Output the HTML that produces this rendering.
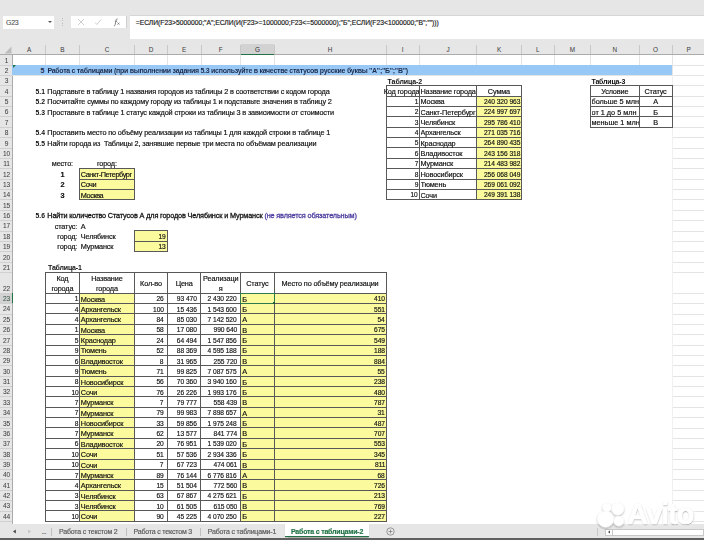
<!DOCTYPE html>
<html><head><meta charset="utf-8"><style>
html,body{margin:0;padding:0}
body{width:704px;height:540px;overflow:hidden;position:relative;background:#fff;font-family:"Liberation Sans",sans-serif}
#w{position:absolute;left:0;top:0;width:704px;height:540px;overflow:hidden;filter:blur(0.5px)}
.t{position:absolute;font-size:7.3px;line-height:8px;letter-spacing:-0.15px;white-space:nowrap;color:#111;-webkit-text-stroke:0.18px currentColor}
</style></head><body><div id="w">
<div style="position:absolute;left:0.00px;top:0.00px;width:704.00px;height:54.60px;background:#e6e6e6"></div>
<div style="position:absolute;left:2.60px;top:15.70px;width:51.90px;height:13.30px;background:#fff"></div>
<div class="t" style="left:6.00px;top:19.00px;color:#505050;font-size:7px;letter-spacing:-0.3px;-webkit-text-stroke:0.1px #505050">G23</div>
<div style="position:absolute;left:47.6px;top:21.2px;width:0;height:0;border-left:2px solid transparent;border-right:2px solid transparent;border-top:2px solid #555"></div>
<div style="position:absolute;left:61.50px;top:17.50px;width:1.20px;height:1.20px;background:#bdbdbd"></div>
<div style="position:absolute;left:61.50px;top:20.10px;width:1.20px;height:1.20px;background:#bdbdbd"></div>
<div style="position:absolute;left:61.50px;top:22.70px;width:1.20px;height:1.20px;background:#bdbdbd"></div>
<div style="position:absolute;left:61.50px;top:25.30px;width:1.20px;height:1.20px;background:#bdbdbd"></div>
<div style="position:absolute;left:70.70px;top:15.90px;width:56.40px;height:11.80px;background:#fff;border-right:0.7px solid #cfcfcf;box-sizing:border-box"></div>
<svg style="position:absolute;left:77px;top:18px" width="8" height="8" viewBox="0 0 8 8"><path d="M1 1L7 7M7 1L1 7" stroke="#c8c8c8" stroke-width="0.9"/></svg>
<svg style="position:absolute;left:94px;top:18px" width="8" height="8" viewBox="0 0 8 8"><path d="M1 4.5L3 6.5L7 1.5" stroke="#c8c8c8" stroke-width="0.9" fill="none"/></svg>
<svg style="position:absolute;left:113px;top:18px" width="9" height="9" viewBox="0 0 9 9"><path d="M4.6 0.9C3.6 0.7 3.2 1.4 3.0 2.6L2.2 6.6C2.0 7.5 1.6 7.9 0.9 7.7M1.9 3.2H4.1" stroke="#666" stroke-width="0.8" fill="none"/><path d="M4.6 4.6L6.4 6.6M6.4 4.6L4.6 6.6" stroke="#666" stroke-width="0.7"/></svg>
<div style="position:absolute;left:129.60px;top:15.40px;width:580.00px;height:23.20px;background:#fff;border-top:0.6px solid #d6d6d6;box-sizing:border-box"></div>
<div class="t" style="left:135.70px;top:19.40px;color:#222;font-size:6.75px;letter-spacing:0">=ЕСЛИ(F23&gt;5000000;"А";ЕСЛИ(И(F23&gt;=1000000;F23&lt;=5000000);"Б";ЕСЛИ(F23&lt;1000000;"В";"")))</div>
<div style="position:absolute;left:240.60px;top:44.30px;width:33.50px;height:10.30px;background:#d2d2d2"></div>
<div style="position:absolute;left:240.60px;top:53.50px;width:33.50px;height:1.30px;background:#217346"></div>
<div style="position:absolute;left:45.20px;top:44.90px;width:0.70px;height:9.70px;background:#c8c8c8"></div>
<div style="position:absolute;left:78.90px;top:44.90px;width:0.70px;height:9.70px;background:#c8c8c8"></div>
<div style="position:absolute;left:134.30px;top:44.90px;width:0.70px;height:9.70px;background:#c8c8c8"></div>
<div style="position:absolute;left:167.10px;top:44.90px;width:0.70px;height:9.70px;background:#c8c8c8"></div>
<div style="position:absolute;left:200.60px;top:44.90px;width:0.70px;height:9.70px;background:#c8c8c8"></div>
<div style="position:absolute;left:240.30px;top:44.90px;width:0.70px;height:9.70px;background:#c8c8c8"></div>
<div style="position:absolute;left:273.80px;top:44.90px;width:0.70px;height:9.70px;background:#c8c8c8"></div>
<div style="position:absolute;left:385.70px;top:44.90px;width:0.70px;height:9.70px;background:#c8c8c8"></div>
<div style="position:absolute;left:419.00px;top:44.90px;width:0.70px;height:9.70px;background:#c8c8c8"></div>
<div style="position:absolute;left:476.30px;top:44.90px;width:0.70px;height:9.70px;background:#c8c8c8"></div>
<div style="position:absolute;left:521.00px;top:44.90px;width:0.70px;height:9.70px;background:#c8c8c8"></div>
<div style="position:absolute;left:553.70px;top:44.90px;width:0.70px;height:9.70px;background:#c8c8c8"></div>
<div style="position:absolute;left:590.20px;top:44.90px;width:0.70px;height:9.70px;background:#c8c8c8"></div>
<div style="position:absolute;left:638.70px;top:44.90px;width:0.70px;height:9.70px;background:#c8c8c8"></div>
<div style="position:absolute;left:671.70px;top:44.90px;width:0.70px;height:9.70px;background:#c8c8c8"></div>
<div style="position:absolute;left:704.90px;top:44.90px;width:0.70px;height:9.70px;background:#c8c8c8"></div>
<div style="position:absolute;left:0.00px;top:54.10px;width:704.00px;height:0.80px;background:#ababab"></div>
<div style="position:absolute;left:240.60px;top:53.50px;width:33.50px;height:1.30px;background:#217346"></div>
<div class="t" style="left:-71.05px;width:200px;top:45.70px;text-align:center;font-size:6.4px;color:#444;-webkit-text-stroke:0.05px #444">A</div>
<div class="t" style="left:-37.65px;width:200px;top:45.70px;text-align:center;font-size:6.4px;color:#444;-webkit-text-stroke:0.05px #444">B</div>
<div class="t" style="left:6.90px;width:200px;top:45.70px;text-align:center;font-size:6.4px;color:#444;-webkit-text-stroke:0.05px #444">C</div>
<div class="t" style="left:51.00px;width:200px;top:45.70px;text-align:center;font-size:6.4px;color:#444;-webkit-text-stroke:0.05px #444">D</div>
<div class="t" style="left:84.15px;width:200px;top:45.70px;text-align:center;font-size:6.4px;color:#444;-webkit-text-stroke:0.05px #444">E</div>
<div class="t" style="left:120.75px;width:200px;top:45.70px;text-align:center;font-size:6.4px;color:#444;-webkit-text-stroke:0.05px #444">F</div>
<div class="t" style="left:157.35px;width:200px;top:45.70px;text-align:center;font-size:6.4px;color:#333;-webkit-text-stroke:0.05px #333">G</div>
<div class="t" style="left:230.05px;width:200px;top:45.70px;text-align:center;font-size:6.4px;color:#444;-webkit-text-stroke:0.05px #444">H</div>
<div class="t" style="left:302.65px;width:200px;top:45.70px;text-align:center;font-size:6.4px;color:#444;-webkit-text-stroke:0.05px #444">I</div>
<div class="t" style="left:347.95px;width:200px;top:45.70px;text-align:center;font-size:6.4px;color:#444;-webkit-text-stroke:0.05px #444">J</div>
<div class="t" style="left:398.95px;width:200px;top:45.70px;text-align:center;font-size:6.4px;color:#444;-webkit-text-stroke:0.05px #444">K</div>
<div class="t" style="left:437.65px;width:200px;top:45.70px;text-align:center;font-size:6.4px;color:#444;-webkit-text-stroke:0.05px #444">L</div>
<div class="t" style="left:472.25px;width:200px;top:45.70px;text-align:center;font-size:6.4px;color:#444;-webkit-text-stroke:0.05px #444">M</div>
<div class="t" style="left:514.75px;width:200px;top:45.70px;text-align:center;font-size:6.4px;color:#444;-webkit-text-stroke:0.05px #444">N</div>
<div class="t" style="left:555.50px;width:200px;top:45.70px;text-align:center;font-size:6.4px;color:#444;-webkit-text-stroke:0.05px #444">O</div>
<div class="t" style="left:588.60px;width:200px;top:45.70px;text-align:center;font-size:6.4px;color:#444;-webkit-text-stroke:0.05px #444">P</div>
<svg style="position:absolute;left:4px;top:46px" width="8" height="8" viewBox="0 0 8 8"><path d="M7.5 0.5L7.5 7.5L0.5 7.5Z" fill="#bdbdbd"/></svg>
<div style="position:absolute;left:0.00px;top:54.60px;width:12.40px;height:469.40px;background:#e6e6e6"></div>
<div style="position:absolute;left:0.00px;top:293.11px;width:12.40px;height:10.37px;background:#d2d2d2"></div>
<div style="position:absolute;left:0.00px;top:64.62px;width:12.40px;height:0.70px;background:#d0d0d0"></div>
<div class="t" style="left:-93.60px;width:200px;top:56.57px;text-align:center;font-size:6.6px;color:#444;letter-spacing:-0.2px;-webkit-text-stroke:0.05px #444">1</div>
<div style="position:absolute;left:0.00px;top:74.99px;width:12.40px;height:0.70px;background:#d0d0d0"></div>
<div class="t" style="left:-93.60px;width:200px;top:66.94px;text-align:center;font-size:6.6px;color:#444;letter-spacing:-0.2px;-webkit-text-stroke:0.05px #444">2</div>
<div style="position:absolute;left:0.00px;top:85.36px;width:12.40px;height:0.70px;background:#d0d0d0"></div>
<div class="t" style="left:-93.60px;width:200px;top:77.31px;text-align:center;font-size:6.6px;color:#444;letter-spacing:-0.2px;-webkit-text-stroke:0.05px #444">3</div>
<div style="position:absolute;left:0.00px;top:95.73px;width:12.40px;height:0.70px;background:#d0d0d0"></div>
<div class="t" style="left:-93.60px;width:200px;top:87.68px;text-align:center;font-size:6.6px;color:#444;letter-spacing:-0.2px;-webkit-text-stroke:0.05px #444">4</div>
<div style="position:absolute;left:0.00px;top:106.10px;width:12.40px;height:0.70px;background:#d0d0d0"></div>
<div class="t" style="left:-93.60px;width:200px;top:98.05px;text-align:center;font-size:6.6px;color:#444;letter-spacing:-0.2px;-webkit-text-stroke:0.05px #444">5</div>
<div style="position:absolute;left:0.00px;top:116.47px;width:12.40px;height:0.70px;background:#d0d0d0"></div>
<div class="t" style="left:-93.60px;width:200px;top:108.42px;text-align:center;font-size:6.6px;color:#444;letter-spacing:-0.2px;-webkit-text-stroke:0.05px #444">6</div>
<div style="position:absolute;left:0.00px;top:126.84px;width:12.40px;height:0.70px;background:#d0d0d0"></div>
<div class="t" style="left:-93.60px;width:200px;top:118.79px;text-align:center;font-size:6.6px;color:#444;letter-spacing:-0.2px;-webkit-text-stroke:0.05px #444">7</div>
<div style="position:absolute;left:0.00px;top:137.21px;width:12.40px;height:0.70px;background:#d0d0d0"></div>
<div class="t" style="left:-93.60px;width:200px;top:129.16px;text-align:center;font-size:6.6px;color:#444;letter-spacing:-0.2px;-webkit-text-stroke:0.05px #444">8</div>
<div style="position:absolute;left:0.00px;top:147.58px;width:12.40px;height:0.70px;background:#d0d0d0"></div>
<div class="t" style="left:-93.60px;width:200px;top:139.53px;text-align:center;font-size:6.6px;color:#444;letter-spacing:-0.2px;-webkit-text-stroke:0.05px #444">9</div>
<div style="position:absolute;left:0.00px;top:157.95px;width:12.40px;height:0.70px;background:#d0d0d0"></div>
<div class="t" style="left:-93.60px;width:200px;top:149.90px;text-align:center;font-size:6.6px;color:#444;letter-spacing:-0.2px;-webkit-text-stroke:0.05px #444">10</div>
<div style="position:absolute;left:0.00px;top:168.32px;width:12.40px;height:0.70px;background:#d0d0d0"></div>
<div class="t" style="left:-93.60px;width:200px;top:160.27px;text-align:center;font-size:6.6px;color:#444;letter-spacing:-0.2px;-webkit-text-stroke:0.05px #444">11</div>
<div style="position:absolute;left:0.00px;top:178.69px;width:12.40px;height:0.70px;background:#d0d0d0"></div>
<div class="t" style="left:-93.60px;width:200px;top:170.64px;text-align:center;font-size:6.6px;color:#444;letter-spacing:-0.2px;-webkit-text-stroke:0.05px #444">12</div>
<div style="position:absolute;left:0.00px;top:189.06px;width:12.40px;height:0.70px;background:#d0d0d0"></div>
<div class="t" style="left:-93.60px;width:200px;top:181.01px;text-align:center;font-size:6.6px;color:#444;letter-spacing:-0.2px;-webkit-text-stroke:0.05px #444">13</div>
<div style="position:absolute;left:0.00px;top:199.43px;width:12.40px;height:0.70px;background:#d0d0d0"></div>
<div class="t" style="left:-93.60px;width:200px;top:191.38px;text-align:center;font-size:6.6px;color:#444;letter-spacing:-0.2px;-webkit-text-stroke:0.05px #444">14</div>
<div style="position:absolute;left:0.00px;top:209.80px;width:12.40px;height:0.70px;background:#d0d0d0"></div>
<div class="t" style="left:-93.60px;width:200px;top:201.75px;text-align:center;font-size:6.6px;color:#444;letter-spacing:-0.2px;-webkit-text-stroke:0.05px #444">15</div>
<div style="position:absolute;left:0.00px;top:220.17px;width:12.40px;height:0.70px;background:#d0d0d0"></div>
<div class="t" style="left:-93.60px;width:200px;top:212.12px;text-align:center;font-size:6.6px;color:#444;letter-spacing:-0.2px;-webkit-text-stroke:0.05px #444">16</div>
<div style="position:absolute;left:0.00px;top:230.54px;width:12.40px;height:0.70px;background:#d0d0d0"></div>
<div class="t" style="left:-93.60px;width:200px;top:222.49px;text-align:center;font-size:6.6px;color:#444;letter-spacing:-0.2px;-webkit-text-stroke:0.05px #444">17</div>
<div style="position:absolute;left:0.00px;top:240.91px;width:12.40px;height:0.70px;background:#d0d0d0"></div>
<div class="t" style="left:-93.60px;width:200px;top:232.86px;text-align:center;font-size:6.6px;color:#444;letter-spacing:-0.2px;-webkit-text-stroke:0.05px #444">18</div>
<div style="position:absolute;left:0.00px;top:251.28px;width:12.40px;height:0.70px;background:#d0d0d0"></div>
<div class="t" style="left:-93.60px;width:200px;top:243.23px;text-align:center;font-size:6.6px;color:#444;letter-spacing:-0.2px;-webkit-text-stroke:0.05px #444">19</div>
<div style="position:absolute;left:0.00px;top:261.65px;width:12.40px;height:0.70px;background:#d0d0d0"></div>
<div class="t" style="left:-93.60px;width:200px;top:253.60px;text-align:center;font-size:6.6px;color:#444;letter-spacing:-0.2px;-webkit-text-stroke:0.05px #444">20</div>
<div style="position:absolute;left:0.00px;top:272.02px;width:12.40px;height:0.70px;background:#d0d0d0"></div>
<div class="t" style="left:-93.60px;width:200px;top:263.97px;text-align:center;font-size:6.6px;color:#444;letter-spacing:-0.2px;-webkit-text-stroke:0.05px #444">21</div>
<div style="position:absolute;left:0.00px;top:292.76px;width:12.40px;height:0.70px;background:#d0d0d0"></div>
<div class="t" style="left:-93.60px;width:200px;top:284.71px;text-align:center;font-size:6.6px;color:#444;letter-spacing:-0.2px;-webkit-text-stroke:0.05px #444">22</div>
<div style="position:absolute;left:0.00px;top:303.13px;width:12.40px;height:0.70px;background:#d0d0d0"></div>
<div class="t" style="left:-93.60px;width:200px;top:295.08px;text-align:center;font-size:6.6px;color:#3a5a48;letter-spacing:-0.2px;-webkit-text-stroke:0.05px #3a5a48">23</div>
<div style="position:absolute;left:0.00px;top:313.50px;width:12.40px;height:0.70px;background:#d0d0d0"></div>
<div class="t" style="left:-93.60px;width:200px;top:305.45px;text-align:center;font-size:6.6px;color:#444;letter-spacing:-0.2px;-webkit-text-stroke:0.05px #444">24</div>
<div style="position:absolute;left:0.00px;top:323.87px;width:12.40px;height:0.70px;background:#d0d0d0"></div>
<div class="t" style="left:-93.60px;width:200px;top:315.82px;text-align:center;font-size:6.6px;color:#444;letter-spacing:-0.2px;-webkit-text-stroke:0.05px #444">25</div>
<div style="position:absolute;left:0.00px;top:334.24px;width:12.40px;height:0.70px;background:#d0d0d0"></div>
<div class="t" style="left:-93.60px;width:200px;top:326.19px;text-align:center;font-size:6.6px;color:#444;letter-spacing:-0.2px;-webkit-text-stroke:0.05px #444">26</div>
<div style="position:absolute;left:0.00px;top:344.61px;width:12.40px;height:0.70px;background:#d0d0d0"></div>
<div class="t" style="left:-93.60px;width:200px;top:336.56px;text-align:center;font-size:6.6px;color:#444;letter-spacing:-0.2px;-webkit-text-stroke:0.05px #444">27</div>
<div style="position:absolute;left:0.00px;top:354.98px;width:12.40px;height:0.70px;background:#d0d0d0"></div>
<div class="t" style="left:-93.60px;width:200px;top:346.93px;text-align:center;font-size:6.6px;color:#444;letter-spacing:-0.2px;-webkit-text-stroke:0.05px #444">28</div>
<div style="position:absolute;left:0.00px;top:365.35px;width:12.40px;height:0.70px;background:#d0d0d0"></div>
<div class="t" style="left:-93.60px;width:200px;top:357.30px;text-align:center;font-size:6.6px;color:#444;letter-spacing:-0.2px;-webkit-text-stroke:0.05px #444">29</div>
<div style="position:absolute;left:0.00px;top:375.72px;width:12.40px;height:0.70px;background:#d0d0d0"></div>
<div class="t" style="left:-93.60px;width:200px;top:367.67px;text-align:center;font-size:6.6px;color:#444;letter-spacing:-0.2px;-webkit-text-stroke:0.05px #444">30</div>
<div style="position:absolute;left:0.00px;top:386.09px;width:12.40px;height:0.70px;background:#d0d0d0"></div>
<div class="t" style="left:-93.60px;width:200px;top:378.04px;text-align:center;font-size:6.6px;color:#444;letter-spacing:-0.2px;-webkit-text-stroke:0.05px #444">31</div>
<div style="position:absolute;left:0.00px;top:396.46px;width:12.40px;height:0.70px;background:#d0d0d0"></div>
<div class="t" style="left:-93.60px;width:200px;top:388.41px;text-align:center;font-size:6.6px;color:#444;letter-spacing:-0.2px;-webkit-text-stroke:0.05px #444">32</div>
<div style="position:absolute;left:0.00px;top:406.83px;width:12.40px;height:0.70px;background:#d0d0d0"></div>
<div class="t" style="left:-93.60px;width:200px;top:398.78px;text-align:center;font-size:6.6px;color:#444;letter-spacing:-0.2px;-webkit-text-stroke:0.05px #444">33</div>
<div style="position:absolute;left:0.00px;top:417.20px;width:12.40px;height:0.70px;background:#d0d0d0"></div>
<div class="t" style="left:-93.60px;width:200px;top:409.15px;text-align:center;font-size:6.6px;color:#444;letter-spacing:-0.2px;-webkit-text-stroke:0.05px #444">34</div>
<div style="position:absolute;left:0.00px;top:427.57px;width:12.40px;height:0.70px;background:#d0d0d0"></div>
<div class="t" style="left:-93.60px;width:200px;top:419.52px;text-align:center;font-size:6.6px;color:#444;letter-spacing:-0.2px;-webkit-text-stroke:0.05px #444">35</div>
<div style="position:absolute;left:0.00px;top:437.94px;width:12.40px;height:0.70px;background:#d0d0d0"></div>
<div class="t" style="left:-93.60px;width:200px;top:429.89px;text-align:center;font-size:6.6px;color:#444;letter-spacing:-0.2px;-webkit-text-stroke:0.05px #444">36</div>
<div style="position:absolute;left:0.00px;top:448.31px;width:12.40px;height:0.70px;background:#d0d0d0"></div>
<div class="t" style="left:-93.60px;width:200px;top:440.26px;text-align:center;font-size:6.6px;color:#444;letter-spacing:-0.2px;-webkit-text-stroke:0.05px #444">37</div>
<div style="position:absolute;left:0.00px;top:458.68px;width:12.40px;height:0.70px;background:#d0d0d0"></div>
<div class="t" style="left:-93.60px;width:200px;top:450.63px;text-align:center;font-size:6.6px;color:#444;letter-spacing:-0.2px;-webkit-text-stroke:0.05px #444">38</div>
<div style="position:absolute;left:0.00px;top:469.05px;width:12.40px;height:0.70px;background:#d0d0d0"></div>
<div class="t" style="left:-93.60px;width:200px;top:461.00px;text-align:center;font-size:6.6px;color:#444;letter-spacing:-0.2px;-webkit-text-stroke:0.05px #444">39</div>
<div style="position:absolute;left:0.00px;top:479.42px;width:12.40px;height:0.70px;background:#d0d0d0"></div>
<div class="t" style="left:-93.60px;width:200px;top:471.37px;text-align:center;font-size:6.6px;color:#444;letter-spacing:-0.2px;-webkit-text-stroke:0.05px #444">40</div>
<div style="position:absolute;left:0.00px;top:489.79px;width:12.40px;height:0.70px;background:#d0d0d0"></div>
<div class="t" style="left:-93.60px;width:200px;top:481.74px;text-align:center;font-size:6.6px;color:#444;letter-spacing:-0.2px;-webkit-text-stroke:0.05px #444">41</div>
<div style="position:absolute;left:0.00px;top:500.16px;width:12.40px;height:0.70px;background:#d0d0d0"></div>
<div class="t" style="left:-93.60px;width:200px;top:492.11px;text-align:center;font-size:6.6px;color:#444;letter-spacing:-0.2px;-webkit-text-stroke:0.05px #444">42</div>
<div style="position:absolute;left:0.00px;top:510.53px;width:12.40px;height:0.70px;background:#d0d0d0"></div>
<div class="t" style="left:-93.60px;width:200px;top:502.48px;text-align:center;font-size:6.6px;color:#444;letter-spacing:-0.2px;-webkit-text-stroke:0.05px #444">43</div>
<div style="position:absolute;left:0.00px;top:520.90px;width:12.40px;height:0.70px;background:#d0d0d0"></div>
<div class="t" style="left:-93.60px;width:200px;top:512.85px;text-align:center;font-size:6.6px;color:#444;letter-spacing:-0.2px;-webkit-text-stroke:0.05px #444">44</div>
<div style="position:absolute;left:0.00px;top:531.27px;width:12.40px;height:0.70px;background:#d0d0d0"></div>
<div style="position:absolute;left:12.00px;top:54.60px;width:0.80px;height:469.40px;background:#ababab"></div>
<div style="position:absolute;left:11.60px;top:293.11px;width:1.10px;height:10.37px;background:#217346"></div>
<div style="position:absolute;left:45.15px;top:54.60px;width:0.70px;height:20.74px;background:#e4e4e4"></div>
<div style="position:absolute;left:78.85px;top:54.60px;width:0.70px;height:20.74px;background:#e4e4e4"></div>
<div style="position:absolute;left:134.25px;top:54.60px;width:0.70px;height:20.74px;background:#e4e4e4"></div>
<div style="position:absolute;left:167.05px;top:54.60px;width:0.70px;height:20.74px;background:#e4e4e4"></div>
<div style="position:absolute;left:200.55px;top:54.60px;width:0.70px;height:20.74px;background:#e4e4e4"></div>
<div style="position:absolute;left:240.25px;top:54.60px;width:0.70px;height:20.74px;background:#e4e4e4"></div>
<div style="position:absolute;left:273.75px;top:54.60px;width:0.70px;height:20.74px;background:#e4e4e4"></div>
<div style="position:absolute;left:385.65px;top:54.60px;width:0.70px;height:20.74px;background:#e4e4e4"></div>
<div style="position:absolute;left:418.95px;top:54.60px;width:0.70px;height:20.74px;background:#e4e4e4"></div>
<div style="position:absolute;left:476.25px;top:54.60px;width:0.70px;height:20.74px;background:#e4e4e4"></div>
<div style="position:absolute;left:520.95px;top:54.60px;width:0.70px;height:20.74px;background:#e4e4e4"></div>
<div style="position:absolute;left:553.65px;top:54.60px;width:0.70px;height:20.74px;background:#e4e4e4"></div>
<div style="position:absolute;left:590.15px;top:54.60px;width:0.70px;height:20.74px;background:#e4e4e4"></div>
<div style="position:absolute;left:638.65px;top:54.60px;width:0.70px;height:20.74px;background:#e4e4e4"></div>
<div style="position:absolute;left:671.65px;top:54.60px;width:0.70px;height:20.74px;background:#e4e4e4"></div>
<div style="position:absolute;left:704.85px;top:54.60px;width:0.70px;height:20.74px;background:#e4e4e4"></div>
<div style="position:absolute;left:12.40px;top:64.62px;width:704.00px;height:0.70px;background:#e4e4e4"></div>
<div style="position:absolute;left:12.40px;top:74.99px;width:704.00px;height:0.70px;background:#e4e4e4"></div>
<div style="position:absolute;left:672.00px;top:85.36px;width:32.00px;height:0.70px;background:#e4e4e4"></div>
<div style="position:absolute;left:672.00px;top:95.73px;width:32.00px;height:0.70px;background:#e4e4e4"></div>
<div style="position:absolute;left:672.00px;top:106.10px;width:32.00px;height:0.70px;background:#e4e4e4"></div>
<div style="position:absolute;left:672.00px;top:116.47px;width:32.00px;height:0.70px;background:#e4e4e4"></div>
<div style="position:absolute;left:672.00px;top:126.84px;width:32.00px;height:0.70px;background:#e4e4e4"></div>
<div style="position:absolute;left:672.00px;top:137.21px;width:32.00px;height:0.70px;background:#e4e4e4"></div>
<div style="position:absolute;left:672.00px;top:147.58px;width:32.00px;height:0.70px;background:#e4e4e4"></div>
<div style="position:absolute;left:672.00px;top:157.95px;width:32.00px;height:0.70px;background:#e4e4e4"></div>
<div style="position:absolute;left:672.00px;top:168.32px;width:32.00px;height:0.70px;background:#e4e4e4"></div>
<div style="position:absolute;left:672.00px;top:178.69px;width:32.00px;height:0.70px;background:#e4e4e4"></div>
<div style="position:absolute;left:672.00px;top:189.06px;width:32.00px;height:0.70px;background:#e4e4e4"></div>
<div style="position:absolute;left:672.00px;top:199.43px;width:32.00px;height:0.70px;background:#e4e4e4"></div>
<div style="position:absolute;left:672.00px;top:209.80px;width:32.00px;height:0.70px;background:#e4e4e4"></div>
<div style="position:absolute;left:672.00px;top:220.17px;width:32.00px;height:0.70px;background:#e4e4e4"></div>
<div style="position:absolute;left:672.00px;top:230.54px;width:32.00px;height:0.70px;background:#e4e4e4"></div>
<div style="position:absolute;left:672.00px;top:240.91px;width:32.00px;height:0.70px;background:#e4e4e4"></div>
<div style="position:absolute;left:672.00px;top:251.28px;width:32.00px;height:0.70px;background:#e4e4e4"></div>
<div style="position:absolute;left:672.00px;top:261.65px;width:32.00px;height:0.70px;background:#e4e4e4"></div>
<div style="position:absolute;left:672.00px;top:272.02px;width:32.00px;height:0.70px;background:#e4e4e4"></div>
<div style="position:absolute;left:672.00px;top:292.76px;width:32.00px;height:0.70px;background:#e4e4e4"></div>
<div style="position:absolute;left:672.00px;top:303.13px;width:32.00px;height:0.70px;background:#e4e4e4"></div>
<div style="position:absolute;left:672.00px;top:313.50px;width:32.00px;height:0.70px;background:#e4e4e4"></div>
<div style="position:absolute;left:672.00px;top:323.87px;width:32.00px;height:0.70px;background:#e4e4e4"></div>
<div style="position:absolute;left:672.00px;top:334.24px;width:32.00px;height:0.70px;background:#e4e4e4"></div>
<div style="position:absolute;left:672.00px;top:344.61px;width:32.00px;height:0.70px;background:#e4e4e4"></div>
<div style="position:absolute;left:672.00px;top:354.98px;width:32.00px;height:0.70px;background:#e4e4e4"></div>
<div style="position:absolute;left:672.00px;top:365.35px;width:32.00px;height:0.70px;background:#e4e4e4"></div>
<div style="position:absolute;left:672.00px;top:375.72px;width:32.00px;height:0.70px;background:#e4e4e4"></div>
<div style="position:absolute;left:672.00px;top:386.09px;width:32.00px;height:0.70px;background:#e4e4e4"></div>
<div style="position:absolute;left:672.00px;top:396.46px;width:32.00px;height:0.70px;background:#e4e4e4"></div>
<div style="position:absolute;left:672.00px;top:406.83px;width:32.00px;height:0.70px;background:#e4e4e4"></div>
<div style="position:absolute;left:672.00px;top:417.20px;width:32.00px;height:0.70px;background:#e4e4e4"></div>
<div style="position:absolute;left:672.00px;top:427.57px;width:32.00px;height:0.70px;background:#e4e4e4"></div>
<div style="position:absolute;left:672.00px;top:437.94px;width:32.00px;height:0.70px;background:#e4e4e4"></div>
<div style="position:absolute;left:672.00px;top:448.31px;width:32.00px;height:0.70px;background:#e4e4e4"></div>
<div style="position:absolute;left:672.00px;top:458.68px;width:32.00px;height:0.70px;background:#e4e4e4"></div>
<div style="position:absolute;left:672.00px;top:469.05px;width:32.00px;height:0.70px;background:#e4e4e4"></div>
<div style="position:absolute;left:672.00px;top:479.42px;width:32.00px;height:0.70px;background:#e4e4e4"></div>
<div style="position:absolute;left:672.00px;top:489.79px;width:32.00px;height:0.70px;background:#e4e4e4"></div>
<div style="position:absolute;left:672.00px;top:500.16px;width:32.00px;height:0.70px;background:#e4e4e4"></div>
<div style="position:absolute;left:672.00px;top:510.53px;width:32.00px;height:0.70px;background:#e4e4e4"></div>
<div style="position:absolute;left:672.00px;top:520.90px;width:32.00px;height:0.70px;background:#e4e4e4"></div>
<div style="position:absolute;left:671.65px;top:75.34px;width:0.70px;height:448.66px;background:#f0f0f0"></div>
<div style="position:absolute;left:12.40px;top:65.27px;width:659.60px;height:9.97px;background:#98c8f6"></div>
<svg style="position:absolute;left:13px;top:65px" width="3" height="3" viewBox="0 0 3 3"><path d="M0 0L3 0L0 3Z" fill="#1e7145"/></svg>
<div class="t" style="right:659.80px;top:67.14px;text-align:right;font-weight:bold;color:#1f2d4d;letter-spacing:-0.28px;font-size:7px;-webkit-text-stroke:0">5</div>
<div class="t" style="left:47.40px;top:67.14px;font-weight:bold;color:#1f2d4d;letter-spacing:-0.28px;font-size:7px;-webkit-text-stroke:0">Работа с таблицами (при выполнении задания 5.3 используйте в качестве статусов русские буквы "А";"Б";"В")</div>
<div class="t" style="right:659.00px;top:87.88px;text-align:right;font-weight:bold;letter-spacing:0;font-size:6.8px;-webkit-text-stroke:0">5.1</div>
<div class="t" style="left:47.30px;top:87.88px;">Подставьте в таблицу 1 названия городов из таблицы 2 в соответствии с кодом города</div>
<div class="t" style="right:659.00px;top:98.25px;text-align:right;font-weight:bold;letter-spacing:0;font-size:6.8px;-webkit-text-stroke:0">5.2</div>
<div class="t" style="left:47.30px;top:98.25px;">Посчитайте суммы по каждому городу из таблицы 1 и подставьте значения в таблицу 2</div>
<div class="t" style="right:659.00px;top:108.62px;text-align:right;font-weight:bold;letter-spacing:0;font-size:6.8px;-webkit-text-stroke:0">5.3</div>
<div class="t" style="left:47.30px;top:108.62px;">Проставьте в таблице 1 статус каждой строки из таблицы 3 в зависимости от стоимости</div>
<div class="t" style="right:659.00px;top:129.36px;text-align:right;font-weight:bold;letter-spacing:0;font-size:6.8px;-webkit-text-stroke:0">5.4</div>
<div class="t" style="left:47.30px;top:129.36px;">Проставить место по объёму реализации из таблицы 1 для каждой строки в таблице 1</div>
<div class="t" style="right:659.00px;top:139.73px;text-align:right;font-weight:bold;letter-spacing:0;font-size:6.8px;-webkit-text-stroke:0">5.5</div>
<div class="t" style="left:47.30px;top:139.73px;">Найти города из&nbsp; Таблицы 2, занявшие первые три места по объёмам реализации</div>
<div class="t" style="right:659.00px;top:212.32px;text-align:right;font-weight:bold;letter-spacing:0;font-size:6.8px;-webkit-text-stroke:0">5.6</div>
<div class="t" style="left:47.30px;top:212.32px;letter-spacing:-0.15px;-webkit-text-stroke:0.28px currentColor">Найти количество Статусов А для городов Челябинск и Мурманск <span style="color:#4a3c9e">(не является обязательным)</span></div>
<div class="t" style="left:-37.65px;width:200px;top:160.47px;text-align:center;">место:</div>
<div class="t" style="left:6.90px;width:200px;top:160.47px;text-align:center;">город:</div>
<div class="t" style="left:-37.65px;width:200px;top:170.84px;text-align:center;font-weight:bold">1</div>
<div class="t" style="left:-37.65px;width:200px;top:181.21px;text-align:center;font-weight:bold">2</div>
<div class="t" style="left:-37.65px;width:200px;top:191.58px;text-align:center;font-weight:bold">3</div>
<div style="position:absolute;left:79.20px;top:168.67px;width:55.40px;height:31.11px;background:#fbfa9c"></div>
<div style="position:absolute;left:78.75px;top:168.22px;width:0.90px;height:32.01px;background:#585858"></div>
<div style="position:absolute;left:134.15px;top:168.22px;width:0.90px;height:32.01px;background:#585858"></div>
<div style="position:absolute;left:78.75px;top:168.22px;width:56.30px;height:0.90px;background:#585858"></div>
<div style="position:absolute;left:78.75px;top:178.59px;width:56.30px;height:0.90px;background:#585858"></div>
<div style="position:absolute;left:78.75px;top:188.96px;width:56.30px;height:0.90px;background:#585858"></div>
<div style="position:absolute;left:78.75px;top:199.33px;width:56.30px;height:0.90px;background:#585858"></div>
<div class="t" style="left:80.80px;top:170.84px;letter-spacing:-0.42px">Санкт-Петербург</div>
<div class="t" style="left:80.80px;top:181.21px;letter-spacing:-0.42px">Сочи</div>
<div class="t" style="left:80.80px;top:191.58px;letter-spacing:-0.42px">Москва</div>
<div class="t" style="right:626.80px;top:222.69px;text-align:right;">статус:</div>
<div class="t" style="left:80.80px;top:222.69px;">А</div>
<div class="t" style="right:626.80px;top:233.06px;text-align:right;">город:</div>
<div class="t" style="left:80.80px;top:233.06px;">Челябинск</div>
<div class="t" style="right:626.80px;top:243.43px;text-align:right;">город:</div>
<div class="t" style="left:80.80px;top:243.43px;">Мурманск</div>
<div style="position:absolute;left:134.60px;top:230.89px;width:32.80px;height:20.74px;background:#fbfa9c"></div>
<div style="position:absolute;left:134.15px;top:230.44px;width:0.90px;height:21.64px;background:#585858"></div>
<div style="position:absolute;left:166.95px;top:230.44px;width:0.90px;height:21.64px;background:#585858"></div>
<div style="position:absolute;left:134.15px;top:230.44px;width:33.70px;height:0.90px;background:#585858"></div>
<div style="position:absolute;left:134.15px;top:240.81px;width:33.70px;height:0.90px;background:#585858"></div>
<div style="position:absolute;left:134.15px;top:251.18px;width:33.70px;height:0.90px;background:#585858"></div>
<div class="t" style="right:538.20px;top:233.06px;text-align:right;font-size:7.9px;letter-spacing:-0.05px;transform:scaleX(0.84);transform-origin:100% 50%;margin-top:-0.3px">19</div>
<div class="t" style="right:538.20px;top:243.43px;text-align:right;font-size:7.9px;letter-spacing:-0.05px;transform:scaleX(0.84);transform-origin:100% 50%;margin-top:-0.3px">13</div>
<div class="t" style="left:387.60px;top:77.51px;font-weight:bold;letter-spacing:-0.1px;font-size:7px;-webkit-text-stroke:0">Таблица-2</div>
<div style="position:absolute;left:476.60px;top:96.08px;width:44.70px;height:103.70px;background:#fbfa9c"></div>
<div style="position:absolute;left:385.55px;top:85.26px;width:0.90px;height:114.97px;background:#585858"></div>
<div style="position:absolute;left:418.85px;top:85.26px;width:0.90px;height:114.97px;background:#585858"></div>
<div style="position:absolute;left:476.15px;top:85.26px;width:0.90px;height:114.97px;background:#585858"></div>
<div style="position:absolute;left:520.85px;top:85.26px;width:0.90px;height:114.97px;background:#585858"></div>
<div style="position:absolute;left:385.55px;top:85.26px;width:136.20px;height:0.90px;background:#585858"></div>
<div style="position:absolute;left:385.55px;top:95.63px;width:136.20px;height:0.90px;background:#585858"></div>
<div style="position:absolute;left:385.55px;top:106.00px;width:136.20px;height:0.90px;background:#585858"></div>
<div style="position:absolute;left:385.55px;top:116.37px;width:136.20px;height:0.90px;background:#585858"></div>
<div style="position:absolute;left:385.55px;top:126.74px;width:136.20px;height:0.90px;background:#585858"></div>
<div style="position:absolute;left:385.55px;top:137.11px;width:136.20px;height:0.90px;background:#585858"></div>
<div style="position:absolute;left:385.55px;top:147.48px;width:136.20px;height:0.90px;background:#585858"></div>
<div style="position:absolute;left:385.55px;top:157.85px;width:136.20px;height:0.90px;background:#585858"></div>
<div style="position:absolute;left:385.55px;top:168.22px;width:136.20px;height:0.90px;background:#585858"></div>
<div style="position:absolute;left:385.55px;top:178.59px;width:136.20px;height:0.90px;background:#585858"></div>
<div style="position:absolute;left:385.55px;top:188.96px;width:136.20px;height:0.90px;background:#585858"></div>
<div style="position:absolute;left:385.55px;top:199.33px;width:136.20px;height:0.90px;background:#585858"></div>
<div class="t" style="left:354.10px;width:65.20px;overflow:hidden;top:87.88px;white-space:nowrap"><span style="position:absolute;left:29.55px">Код города</span>&nbsp;</div>
<div class="t" style="left:420.50px;width:56.10px;overflow:hidden;top:87.88px;white-space:nowrap">Название города</div>
<div class="t" style="left:398.95px;width:200px;top:87.88px;text-align:center;">Сумма</div>
<div class="t" style="right:286.10px;top:98.25px;text-align:right;font-size:7.9px;letter-spacing:-0.05px;transform:scaleX(0.84);transform-origin:100% 50%;margin-top:-0.3px">1</div>
<div class="t" style="left:420.50px;width:56.10px;overflow:hidden;top:98.25px;white-space:nowrap">Москва</div>
<div class="t" style="right:184.10px;top:98.25px;text-align:right;font-size:7.9px;letter-spacing:-0.05px;transform:scaleX(0.84);transform-origin:100% 50%;margin-top:-0.3px">240 320 963</div>
<div class="t" style="right:286.10px;top:108.62px;text-align:right;font-size:7.9px;letter-spacing:-0.05px;transform:scaleX(0.84);transform-origin:100% 50%;margin-top:-0.3px">2</div>
<div class="t" style="left:420.50px;width:56.10px;overflow:hidden;top:108.62px;white-space:nowrap">Санкт-Петербург</div>
<div class="t" style="right:184.10px;top:108.62px;text-align:right;font-size:7.9px;letter-spacing:-0.05px;transform:scaleX(0.84);transform-origin:100% 50%;margin-top:-0.3px">224 997 697</div>
<div class="t" style="right:286.10px;top:118.99px;text-align:right;font-size:7.9px;letter-spacing:-0.05px;transform:scaleX(0.84);transform-origin:100% 50%;margin-top:-0.3px">3</div>
<div class="t" style="left:420.50px;width:56.10px;overflow:hidden;top:118.99px;white-space:nowrap">Челябинск</div>
<div class="t" style="right:184.10px;top:118.99px;text-align:right;font-size:7.9px;letter-spacing:-0.05px;transform:scaleX(0.84);transform-origin:100% 50%;margin-top:-0.3px">295 786 410</div>
<div class="t" style="right:286.10px;top:129.36px;text-align:right;font-size:7.9px;letter-spacing:-0.05px;transform:scaleX(0.84);transform-origin:100% 50%;margin-top:-0.3px">4</div>
<div class="t" style="left:420.50px;width:56.10px;overflow:hidden;top:129.36px;white-space:nowrap">Архангельск</div>
<div class="t" style="right:184.10px;top:129.36px;text-align:right;font-size:7.9px;letter-spacing:-0.05px;transform:scaleX(0.84);transform-origin:100% 50%;margin-top:-0.3px">271 035 716</div>
<div class="t" style="right:286.10px;top:139.73px;text-align:right;font-size:7.9px;letter-spacing:-0.05px;transform:scaleX(0.84);transform-origin:100% 50%;margin-top:-0.3px">5</div>
<div class="t" style="left:420.50px;width:56.10px;overflow:hidden;top:139.73px;white-space:nowrap">Краснодар</div>
<div class="t" style="right:184.10px;top:139.73px;text-align:right;font-size:7.9px;letter-spacing:-0.05px;transform:scaleX(0.84);transform-origin:100% 50%;margin-top:-0.3px">264 890 435</div>
<div class="t" style="right:286.10px;top:150.10px;text-align:right;font-size:7.9px;letter-spacing:-0.05px;transform:scaleX(0.84);transform-origin:100% 50%;margin-top:-0.3px">6</div>
<div class="t" style="left:420.50px;width:56.10px;overflow:hidden;top:150.10px;white-space:nowrap">Владивосток</div>
<div class="t" style="right:184.10px;top:150.10px;text-align:right;font-size:7.9px;letter-spacing:-0.05px;transform:scaleX(0.84);transform-origin:100% 50%;margin-top:-0.3px">243 156 318</div>
<div class="t" style="right:286.10px;top:160.47px;text-align:right;font-size:7.9px;letter-spacing:-0.05px;transform:scaleX(0.84);transform-origin:100% 50%;margin-top:-0.3px">7</div>
<div class="t" style="left:420.50px;width:56.10px;overflow:hidden;top:160.47px;white-space:nowrap">Мурманск</div>
<div class="t" style="right:184.10px;top:160.47px;text-align:right;font-size:7.9px;letter-spacing:-0.05px;transform:scaleX(0.84);transform-origin:100% 50%;margin-top:-0.3px">214 483 982</div>
<div class="t" style="right:286.10px;top:170.84px;text-align:right;font-size:7.9px;letter-spacing:-0.05px;transform:scaleX(0.84);transform-origin:100% 50%;margin-top:-0.3px">8</div>
<div class="t" style="left:420.50px;width:56.10px;overflow:hidden;top:170.84px;white-space:nowrap">Новосибирск</div>
<div class="t" style="right:184.10px;top:170.84px;text-align:right;font-size:7.9px;letter-spacing:-0.05px;transform:scaleX(0.84);transform-origin:100% 50%;margin-top:-0.3px">256 068 049</div>
<div class="t" style="right:286.10px;top:181.21px;text-align:right;font-size:7.9px;letter-spacing:-0.05px;transform:scaleX(0.84);transform-origin:100% 50%;margin-top:-0.3px">9</div>
<div class="t" style="left:420.50px;width:56.10px;overflow:hidden;top:181.21px;white-space:nowrap">Тюмень</div>
<div class="t" style="right:184.10px;top:181.21px;text-align:right;font-size:7.9px;letter-spacing:-0.05px;transform:scaleX(0.84);transform-origin:100% 50%;margin-top:-0.3px">269 061 092</div>
<div class="t" style="right:286.10px;top:191.58px;text-align:right;font-size:7.9px;letter-spacing:-0.05px;transform:scaleX(0.84);transform-origin:100% 50%;margin-top:-0.3px">10</div>
<div class="t" style="left:420.50px;width:56.10px;overflow:hidden;top:191.58px;white-space:nowrap">Сочи</div>
<div class="t" style="right:184.10px;top:191.58px;text-align:right;font-size:7.9px;letter-spacing:-0.05px;transform:scaleX(0.84);transform-origin:100% 50%;margin-top:-0.3px">249 391 138</div>
<div class="t" style="left:591.50px;top:77.51px;font-weight:bold;letter-spacing:-0.2px;font-size:7px;-webkit-text-stroke:0">Таблица-3</div>
<div style="position:absolute;left:590.05px;top:85.26px;width:0.90px;height:42.38px;background:#585858"></div>
<div style="position:absolute;left:638.55px;top:85.26px;width:0.90px;height:42.38px;background:#585858"></div>
<div style="position:absolute;left:671.55px;top:85.26px;width:0.90px;height:42.38px;background:#585858"></div>
<div style="position:absolute;left:590.05px;top:85.26px;width:82.40px;height:0.90px;background:#585858"></div>
<div style="position:absolute;left:590.05px;top:95.63px;width:82.40px;height:0.90px;background:#585858"></div>
<div style="position:absolute;left:590.05px;top:106.00px;width:82.40px;height:0.90px;background:#585858"></div>
<div style="position:absolute;left:590.05px;top:116.37px;width:82.40px;height:0.90px;background:#585858"></div>
<div style="position:absolute;left:590.05px;top:126.74px;width:82.40px;height:0.90px;background:#585858"></div>
<div class="t" style="left:514.75px;width:200px;top:87.88px;text-align:center;">Условие</div>
<div class="t" style="left:555.50px;width:200px;top:87.88px;text-align:center;">Статус</div>
<div class="t" style="left:591.50px;width:47.50px;overflow:hidden;top:98.25px;white-space:nowrap;letter-spacing:0">больше 5 млн</div>
<div class="t" style="left:555.50px;width:200px;top:98.25px;text-align:center;">А</div>
<div class="t" style="left:591.50px;width:47.50px;overflow:hidden;top:108.62px;white-space:nowrap;letter-spacing:0">от 1 до 5 млн</div>
<div class="t" style="left:555.50px;width:200px;top:108.62px;text-align:center;">Б</div>
<div class="t" style="left:591.50px;width:47.50px;overflow:hidden;top:118.99px;white-space:nowrap;letter-spacing:0">меньше 1 млн</div>
<div class="t" style="left:555.50px;width:200px;top:118.99px;text-align:center;">В</div>
<div class="t" style="left:48.00px;top:264.17px;font-weight:bold;letter-spacing:-0.2px;font-size:7px;-webkit-text-stroke:0">Таблица-1</div>
<div style="position:absolute;left:79.20px;top:293.11px;width:55.40px;height:228.14px;background:#fbfa9c"></div>
<div style="position:absolute;left:240.60px;top:293.11px;width:145.40px;height:228.14px;background:#fbfa9c"></div>
<div style="position:absolute;left:45.05px;top:271.92px;width:0.90px;height:249.78px;background:#585858"></div>
<div style="position:absolute;left:78.75px;top:271.92px;width:0.90px;height:249.78px;background:#585858"></div>
<div style="position:absolute;left:134.15px;top:271.92px;width:0.90px;height:249.78px;background:#585858"></div>
<div style="position:absolute;left:166.95px;top:271.92px;width:0.90px;height:249.78px;background:#585858"></div>
<div style="position:absolute;left:200.45px;top:271.92px;width:0.90px;height:249.78px;background:#585858"></div>
<div style="position:absolute;left:240.15px;top:271.92px;width:0.90px;height:249.78px;background:#585858"></div>
<div style="position:absolute;left:273.65px;top:271.92px;width:0.90px;height:249.78px;background:#585858"></div>
<div style="position:absolute;left:385.55px;top:271.92px;width:0.90px;height:249.78px;background:#585858"></div>
<div style="position:absolute;left:45.05px;top:271.92px;width:341.40px;height:0.90px;background:#585858"></div>
<div style="position:absolute;left:45.05px;top:292.66px;width:341.40px;height:0.90px;background:#585858"></div>
<div style="position:absolute;left:45.05px;top:303.03px;width:341.40px;height:0.90px;background:#585858"></div>
<div style="position:absolute;left:45.05px;top:313.40px;width:341.40px;height:0.90px;background:#585858"></div>
<div style="position:absolute;left:45.05px;top:323.77px;width:341.40px;height:0.90px;background:#585858"></div>
<div style="position:absolute;left:45.05px;top:334.14px;width:341.40px;height:0.90px;background:#585858"></div>
<div style="position:absolute;left:45.05px;top:344.51px;width:341.40px;height:0.90px;background:#585858"></div>
<div style="position:absolute;left:45.05px;top:354.88px;width:341.40px;height:0.90px;background:#585858"></div>
<div style="position:absolute;left:45.05px;top:365.25px;width:341.40px;height:0.90px;background:#585858"></div>
<div style="position:absolute;left:45.05px;top:375.62px;width:341.40px;height:0.90px;background:#585858"></div>
<div style="position:absolute;left:45.05px;top:385.99px;width:341.40px;height:0.90px;background:#585858"></div>
<div style="position:absolute;left:45.05px;top:396.36px;width:341.40px;height:0.90px;background:#585858"></div>
<div style="position:absolute;left:45.05px;top:406.73px;width:341.40px;height:0.90px;background:#585858"></div>
<div style="position:absolute;left:45.05px;top:417.10px;width:341.40px;height:0.90px;background:#585858"></div>
<div style="position:absolute;left:45.05px;top:427.47px;width:341.40px;height:0.90px;background:#585858"></div>
<div style="position:absolute;left:45.05px;top:437.84px;width:341.40px;height:0.90px;background:#585858"></div>
<div style="position:absolute;left:45.05px;top:448.21px;width:341.40px;height:0.90px;background:#585858"></div>
<div style="position:absolute;left:45.05px;top:458.58px;width:341.40px;height:0.90px;background:#585858"></div>
<div style="position:absolute;left:45.05px;top:468.95px;width:341.40px;height:0.90px;background:#585858"></div>
<div style="position:absolute;left:45.05px;top:479.32px;width:341.40px;height:0.90px;background:#585858"></div>
<div style="position:absolute;left:45.05px;top:489.69px;width:341.40px;height:0.90px;background:#585858"></div>
<div style="position:absolute;left:45.05px;top:500.06px;width:341.40px;height:0.90px;background:#585858"></div>
<div style="position:absolute;left:45.05px;top:510.43px;width:341.40px;height:0.90px;background:#585858"></div>
<div style="position:absolute;left:45.05px;top:520.80px;width:341.40px;height:0.90px;background:#585858"></div>
<div class="t" style="left:-37.65px;width:200px;top:274.97px;text-align:center;">Код</div>
<div class="t" style="left:-37.65px;width:200px;top:284.87px;text-align:center;">города</div>
<div class="t" style="left:6.90px;width:200px;top:274.97px;text-align:center;">Название</div>
<div class="t" style="left:6.90px;width:200px;top:284.87px;text-align:center;">города</div>
<div class="t" style="left:51.00px;width:200px;top:279.97px;text-align:center;">Кол-во</div>
<div class="t" style="left:84.15px;width:200px;top:279.97px;text-align:center;">Цена</div>
<div class="t" style="left:120.75px;width:200px;top:274.97px;text-align:center;">Реализаци</div>
<div class="t" style="left:120.75px;width:200px;top:284.87px;text-align:center;">я</div>
<div class="t" style="left:157.35px;width:200px;top:279.97px;text-align:center;">Статус</div>
<div class="t" style="left:230.05px;width:200px;top:279.97px;text-align:center;">Место по объёму реализации</div>
<div class="t" style="right:625.70px;top:295.58px;text-align:right;font-size:7.9px;letter-spacing:-0.05px;transform:scaleX(0.84);transform-origin:100% 50%;margin-top:-0.3px">1</div>
<div class="t" style="left:80.80px;top:295.58px;">Москва</div>
<div class="t" style="right:540.30px;top:295.58px;text-align:right;font-size:7.9px;letter-spacing:-0.05px;transform:scaleX(0.84);transform-origin:100% 50%;margin-top:-0.3px">26</div>
<div class="t" style="right:506.90px;top:295.58px;text-align:right;font-size:7.9px;letter-spacing:-0.05px;transform:scaleX(0.84);transform-origin:100% 50%;margin-top:-0.3px">93 470</div>
<div class="t" style="right:467.30px;top:295.58px;text-align:right;font-size:7.9px;letter-spacing:-0.05px;transform:scaleX(0.84);transform-origin:100% 50%;margin-top:-0.3px">2 430 220</div>
<div class="t" style="left:242.20px;top:295.58px;">Б</div>
<div class="t" style="right:319.00px;top:295.58px;text-align:right;font-size:7.9px;letter-spacing:-0.05px;transform:scaleX(0.84);transform-origin:100% 50%;margin-top:-0.3px">410</div>
<div class="t" style="right:625.70px;top:305.95px;text-align:right;font-size:7.9px;letter-spacing:-0.05px;transform:scaleX(0.84);transform-origin:100% 50%;margin-top:-0.3px">4</div>
<div class="t" style="left:80.80px;top:305.95px;">Архангельск</div>
<div class="t" style="right:540.30px;top:305.95px;text-align:right;font-size:7.9px;letter-spacing:-0.05px;transform:scaleX(0.84);transform-origin:100% 50%;margin-top:-0.3px">100</div>
<div class="t" style="right:506.90px;top:305.95px;text-align:right;font-size:7.9px;letter-spacing:-0.05px;transform:scaleX(0.84);transform-origin:100% 50%;margin-top:-0.3px">15 436</div>
<div class="t" style="right:467.30px;top:305.95px;text-align:right;font-size:7.9px;letter-spacing:-0.05px;transform:scaleX(0.84);transform-origin:100% 50%;margin-top:-0.3px">1 543 600</div>
<div class="t" style="left:242.20px;top:305.95px;">Б</div>
<div class="t" style="right:319.00px;top:305.95px;text-align:right;font-size:7.9px;letter-spacing:-0.05px;transform:scaleX(0.84);transform-origin:100% 50%;margin-top:-0.3px">551</div>
<div class="t" style="right:625.70px;top:316.32px;text-align:right;font-size:7.9px;letter-spacing:-0.05px;transform:scaleX(0.84);transform-origin:100% 50%;margin-top:-0.3px">4</div>
<div class="t" style="left:80.80px;top:316.32px;">Архангельск</div>
<div class="t" style="right:540.30px;top:316.32px;text-align:right;font-size:7.9px;letter-spacing:-0.05px;transform:scaleX(0.84);transform-origin:100% 50%;margin-top:-0.3px">84</div>
<div class="t" style="right:506.90px;top:316.32px;text-align:right;font-size:7.9px;letter-spacing:-0.05px;transform:scaleX(0.84);transform-origin:100% 50%;margin-top:-0.3px">85 030</div>
<div class="t" style="right:467.30px;top:316.32px;text-align:right;font-size:7.9px;letter-spacing:-0.05px;transform:scaleX(0.84);transform-origin:100% 50%;margin-top:-0.3px">7 142 520</div>
<div class="t" style="left:242.20px;top:316.32px;">А</div>
<div class="t" style="right:319.00px;top:316.32px;text-align:right;font-size:7.9px;letter-spacing:-0.05px;transform:scaleX(0.84);transform-origin:100% 50%;margin-top:-0.3px">54</div>
<div class="t" style="right:625.70px;top:326.69px;text-align:right;font-size:7.9px;letter-spacing:-0.05px;transform:scaleX(0.84);transform-origin:100% 50%;margin-top:-0.3px">1</div>
<div class="t" style="left:80.80px;top:326.69px;">Москва</div>
<div class="t" style="right:540.30px;top:326.69px;text-align:right;font-size:7.9px;letter-spacing:-0.05px;transform:scaleX(0.84);transform-origin:100% 50%;margin-top:-0.3px">58</div>
<div class="t" style="right:506.90px;top:326.69px;text-align:right;font-size:7.9px;letter-spacing:-0.05px;transform:scaleX(0.84);transform-origin:100% 50%;margin-top:-0.3px">17 080</div>
<div class="t" style="right:467.30px;top:326.69px;text-align:right;font-size:7.9px;letter-spacing:-0.05px;transform:scaleX(0.84);transform-origin:100% 50%;margin-top:-0.3px">990 640</div>
<div class="t" style="left:242.20px;top:326.69px;">В</div>
<div class="t" style="right:319.00px;top:326.69px;text-align:right;font-size:7.9px;letter-spacing:-0.05px;transform:scaleX(0.84);transform-origin:100% 50%;margin-top:-0.3px">675</div>
<div class="t" style="right:625.70px;top:337.06px;text-align:right;font-size:7.9px;letter-spacing:-0.05px;transform:scaleX(0.84);transform-origin:100% 50%;margin-top:-0.3px">5</div>
<div class="t" style="left:80.80px;top:337.06px;">Краснодар</div>
<div class="t" style="right:540.30px;top:337.06px;text-align:right;font-size:7.9px;letter-spacing:-0.05px;transform:scaleX(0.84);transform-origin:100% 50%;margin-top:-0.3px">24</div>
<div class="t" style="right:506.90px;top:337.06px;text-align:right;font-size:7.9px;letter-spacing:-0.05px;transform:scaleX(0.84);transform-origin:100% 50%;margin-top:-0.3px">64 494</div>
<div class="t" style="right:467.30px;top:337.06px;text-align:right;font-size:7.9px;letter-spacing:-0.05px;transform:scaleX(0.84);transform-origin:100% 50%;margin-top:-0.3px">1 547 856</div>
<div class="t" style="left:242.20px;top:337.06px;">Б</div>
<div class="t" style="right:319.00px;top:337.06px;text-align:right;font-size:7.9px;letter-spacing:-0.05px;transform:scaleX(0.84);transform-origin:100% 50%;margin-top:-0.3px">549</div>
<div class="t" style="right:625.70px;top:347.43px;text-align:right;font-size:7.9px;letter-spacing:-0.05px;transform:scaleX(0.84);transform-origin:100% 50%;margin-top:-0.3px">9</div>
<div class="t" style="left:80.80px;top:347.43px;">Тюмень</div>
<div class="t" style="right:540.30px;top:347.43px;text-align:right;font-size:7.9px;letter-spacing:-0.05px;transform:scaleX(0.84);transform-origin:100% 50%;margin-top:-0.3px">52</div>
<div class="t" style="right:506.90px;top:347.43px;text-align:right;font-size:7.9px;letter-spacing:-0.05px;transform:scaleX(0.84);transform-origin:100% 50%;margin-top:-0.3px">88 369</div>
<div class="t" style="right:467.30px;top:347.43px;text-align:right;font-size:7.9px;letter-spacing:-0.05px;transform:scaleX(0.84);transform-origin:100% 50%;margin-top:-0.3px">4 595 188</div>
<div class="t" style="left:242.20px;top:347.43px;">Б</div>
<div class="t" style="right:319.00px;top:347.43px;text-align:right;font-size:7.9px;letter-spacing:-0.05px;transform:scaleX(0.84);transform-origin:100% 50%;margin-top:-0.3px">188</div>
<div class="t" style="right:625.70px;top:357.80px;text-align:right;font-size:7.9px;letter-spacing:-0.05px;transform:scaleX(0.84);transform-origin:100% 50%;margin-top:-0.3px">6</div>
<div class="t" style="left:80.80px;top:357.80px;">Владивосток</div>
<div class="t" style="right:540.30px;top:357.80px;text-align:right;font-size:7.9px;letter-spacing:-0.05px;transform:scaleX(0.84);transform-origin:100% 50%;margin-top:-0.3px">8</div>
<div class="t" style="right:506.90px;top:357.80px;text-align:right;font-size:7.9px;letter-spacing:-0.05px;transform:scaleX(0.84);transform-origin:100% 50%;margin-top:-0.3px">31 965</div>
<div class="t" style="right:467.30px;top:357.80px;text-align:right;font-size:7.9px;letter-spacing:-0.05px;transform:scaleX(0.84);transform-origin:100% 50%;margin-top:-0.3px">255 720</div>
<div class="t" style="left:242.20px;top:357.80px;">В</div>
<div class="t" style="right:319.00px;top:357.80px;text-align:right;font-size:7.9px;letter-spacing:-0.05px;transform:scaleX(0.84);transform-origin:100% 50%;margin-top:-0.3px">884</div>
<div class="t" style="right:625.70px;top:368.17px;text-align:right;font-size:7.9px;letter-spacing:-0.05px;transform:scaleX(0.84);transform-origin:100% 50%;margin-top:-0.3px">9</div>
<div class="t" style="left:80.80px;top:368.17px;">Тюмень</div>
<div class="t" style="right:540.30px;top:368.17px;text-align:right;font-size:7.9px;letter-spacing:-0.05px;transform:scaleX(0.84);transform-origin:100% 50%;margin-top:-0.3px">71</div>
<div class="t" style="right:506.90px;top:368.17px;text-align:right;font-size:7.9px;letter-spacing:-0.05px;transform:scaleX(0.84);transform-origin:100% 50%;margin-top:-0.3px">99 825</div>
<div class="t" style="right:467.30px;top:368.17px;text-align:right;font-size:7.9px;letter-spacing:-0.05px;transform:scaleX(0.84);transform-origin:100% 50%;margin-top:-0.3px">7 087 575</div>
<div class="t" style="left:242.20px;top:368.17px;">А</div>
<div class="t" style="right:319.00px;top:368.17px;text-align:right;font-size:7.9px;letter-spacing:-0.05px;transform:scaleX(0.84);transform-origin:100% 50%;margin-top:-0.3px">55</div>
<div class="t" style="right:625.70px;top:378.54px;text-align:right;font-size:7.9px;letter-spacing:-0.05px;transform:scaleX(0.84);transform-origin:100% 50%;margin-top:-0.3px">8</div>
<div class="t" style="left:80.80px;top:378.54px;">Новосибирск</div>
<div class="t" style="right:540.30px;top:378.54px;text-align:right;font-size:7.9px;letter-spacing:-0.05px;transform:scaleX(0.84);transform-origin:100% 50%;margin-top:-0.3px">56</div>
<div class="t" style="right:506.90px;top:378.54px;text-align:right;font-size:7.9px;letter-spacing:-0.05px;transform:scaleX(0.84);transform-origin:100% 50%;margin-top:-0.3px">70 360</div>
<div class="t" style="right:467.30px;top:378.54px;text-align:right;font-size:7.9px;letter-spacing:-0.05px;transform:scaleX(0.84);transform-origin:100% 50%;margin-top:-0.3px">3 940 160</div>
<div class="t" style="left:242.20px;top:378.54px;">Б</div>
<div class="t" style="right:319.00px;top:378.54px;text-align:right;font-size:7.9px;letter-spacing:-0.05px;transform:scaleX(0.84);transform-origin:100% 50%;margin-top:-0.3px">238</div>
<div class="t" style="right:625.70px;top:388.91px;text-align:right;font-size:7.9px;letter-spacing:-0.05px;transform:scaleX(0.84);transform-origin:100% 50%;margin-top:-0.3px">10</div>
<div class="t" style="left:80.80px;top:388.91px;">Сочи</div>
<div class="t" style="right:540.30px;top:388.91px;text-align:right;font-size:7.9px;letter-spacing:-0.05px;transform:scaleX(0.84);transform-origin:100% 50%;margin-top:-0.3px">76</div>
<div class="t" style="right:506.90px;top:388.91px;text-align:right;font-size:7.9px;letter-spacing:-0.05px;transform:scaleX(0.84);transform-origin:100% 50%;margin-top:-0.3px">26 226</div>
<div class="t" style="right:467.30px;top:388.91px;text-align:right;font-size:7.9px;letter-spacing:-0.05px;transform:scaleX(0.84);transform-origin:100% 50%;margin-top:-0.3px">1 993 176</div>
<div class="t" style="left:242.20px;top:388.91px;">Б</div>
<div class="t" style="right:319.00px;top:388.91px;text-align:right;font-size:7.9px;letter-spacing:-0.05px;transform:scaleX(0.84);transform-origin:100% 50%;margin-top:-0.3px">480</div>
<div class="t" style="right:625.70px;top:399.28px;text-align:right;font-size:7.9px;letter-spacing:-0.05px;transform:scaleX(0.84);transform-origin:100% 50%;margin-top:-0.3px">7</div>
<div class="t" style="left:80.80px;top:399.28px;">Мурманск</div>
<div class="t" style="right:540.30px;top:399.28px;text-align:right;font-size:7.9px;letter-spacing:-0.05px;transform:scaleX(0.84);transform-origin:100% 50%;margin-top:-0.3px">7</div>
<div class="t" style="right:506.90px;top:399.28px;text-align:right;font-size:7.9px;letter-spacing:-0.05px;transform:scaleX(0.84);transform-origin:100% 50%;margin-top:-0.3px">79 777</div>
<div class="t" style="right:467.30px;top:399.28px;text-align:right;font-size:7.9px;letter-spacing:-0.05px;transform:scaleX(0.84);transform-origin:100% 50%;margin-top:-0.3px">558 439</div>
<div class="t" style="left:242.20px;top:399.28px;">В</div>
<div class="t" style="right:319.00px;top:399.28px;text-align:right;font-size:7.9px;letter-spacing:-0.05px;transform:scaleX(0.84);transform-origin:100% 50%;margin-top:-0.3px">787</div>
<div class="t" style="right:625.70px;top:409.65px;text-align:right;font-size:7.9px;letter-spacing:-0.05px;transform:scaleX(0.84);transform-origin:100% 50%;margin-top:-0.3px">7</div>
<div class="t" style="left:80.80px;top:409.65px;">Мурманск</div>
<div class="t" style="right:540.30px;top:409.65px;text-align:right;font-size:7.9px;letter-spacing:-0.05px;transform:scaleX(0.84);transform-origin:100% 50%;margin-top:-0.3px">79</div>
<div class="t" style="right:506.90px;top:409.65px;text-align:right;font-size:7.9px;letter-spacing:-0.05px;transform:scaleX(0.84);transform-origin:100% 50%;margin-top:-0.3px">99 983</div>
<div class="t" style="right:467.30px;top:409.65px;text-align:right;font-size:7.9px;letter-spacing:-0.05px;transform:scaleX(0.84);transform-origin:100% 50%;margin-top:-0.3px">7 898 657</div>
<div class="t" style="left:242.20px;top:409.65px;">А</div>
<div class="t" style="right:319.00px;top:409.65px;text-align:right;font-size:7.9px;letter-spacing:-0.05px;transform:scaleX(0.84);transform-origin:100% 50%;margin-top:-0.3px">31</div>
<div class="t" style="right:625.70px;top:420.02px;text-align:right;font-size:7.9px;letter-spacing:-0.05px;transform:scaleX(0.84);transform-origin:100% 50%;margin-top:-0.3px">8</div>
<div class="t" style="left:80.80px;top:420.02px;">Новосибирск</div>
<div class="t" style="right:540.30px;top:420.02px;text-align:right;font-size:7.9px;letter-spacing:-0.05px;transform:scaleX(0.84);transform-origin:100% 50%;margin-top:-0.3px">33</div>
<div class="t" style="right:506.90px;top:420.02px;text-align:right;font-size:7.9px;letter-spacing:-0.05px;transform:scaleX(0.84);transform-origin:100% 50%;margin-top:-0.3px">59 856</div>
<div class="t" style="right:467.30px;top:420.02px;text-align:right;font-size:7.9px;letter-spacing:-0.05px;transform:scaleX(0.84);transform-origin:100% 50%;margin-top:-0.3px">1 975 248</div>
<div class="t" style="left:242.20px;top:420.02px;">Б</div>
<div class="t" style="right:319.00px;top:420.02px;text-align:right;font-size:7.9px;letter-spacing:-0.05px;transform:scaleX(0.84);transform-origin:100% 50%;margin-top:-0.3px">487</div>
<div class="t" style="right:625.70px;top:430.39px;text-align:right;font-size:7.9px;letter-spacing:-0.05px;transform:scaleX(0.84);transform-origin:100% 50%;margin-top:-0.3px">7</div>
<div class="t" style="left:80.80px;top:430.39px;">Мурманск</div>
<div class="t" style="right:540.30px;top:430.39px;text-align:right;font-size:7.9px;letter-spacing:-0.05px;transform:scaleX(0.84);transform-origin:100% 50%;margin-top:-0.3px">62</div>
<div class="t" style="right:506.90px;top:430.39px;text-align:right;font-size:7.9px;letter-spacing:-0.05px;transform:scaleX(0.84);transform-origin:100% 50%;margin-top:-0.3px">13 577</div>
<div class="t" style="right:467.30px;top:430.39px;text-align:right;font-size:7.9px;letter-spacing:-0.05px;transform:scaleX(0.84);transform-origin:100% 50%;margin-top:-0.3px">841 774</div>
<div class="t" style="left:242.20px;top:430.39px;">В</div>
<div class="t" style="right:319.00px;top:430.39px;text-align:right;font-size:7.9px;letter-spacing:-0.05px;transform:scaleX(0.84);transform-origin:100% 50%;margin-top:-0.3px">707</div>
<div class="t" style="right:625.70px;top:440.76px;text-align:right;font-size:7.9px;letter-spacing:-0.05px;transform:scaleX(0.84);transform-origin:100% 50%;margin-top:-0.3px">6</div>
<div class="t" style="left:80.80px;top:440.76px;">Владивосток</div>
<div class="t" style="right:540.30px;top:440.76px;text-align:right;font-size:7.9px;letter-spacing:-0.05px;transform:scaleX(0.84);transform-origin:100% 50%;margin-top:-0.3px">20</div>
<div class="t" style="right:506.90px;top:440.76px;text-align:right;font-size:7.9px;letter-spacing:-0.05px;transform:scaleX(0.84);transform-origin:100% 50%;margin-top:-0.3px">76 951</div>
<div class="t" style="right:467.30px;top:440.76px;text-align:right;font-size:7.9px;letter-spacing:-0.05px;transform:scaleX(0.84);transform-origin:100% 50%;margin-top:-0.3px">1 539 020</div>
<div class="t" style="left:242.20px;top:440.76px;">Б</div>
<div class="t" style="right:319.00px;top:440.76px;text-align:right;font-size:7.9px;letter-spacing:-0.05px;transform:scaleX(0.84);transform-origin:100% 50%;margin-top:-0.3px">553</div>
<div class="t" style="right:625.70px;top:451.13px;text-align:right;font-size:7.9px;letter-spacing:-0.05px;transform:scaleX(0.84);transform-origin:100% 50%;margin-top:-0.3px">10</div>
<div class="t" style="left:80.80px;top:451.13px;">Сочи</div>
<div class="t" style="right:540.30px;top:451.13px;text-align:right;font-size:7.9px;letter-spacing:-0.05px;transform:scaleX(0.84);transform-origin:100% 50%;margin-top:-0.3px">51</div>
<div class="t" style="right:506.90px;top:451.13px;text-align:right;font-size:7.9px;letter-spacing:-0.05px;transform:scaleX(0.84);transform-origin:100% 50%;margin-top:-0.3px">57 536</div>
<div class="t" style="right:467.30px;top:451.13px;text-align:right;font-size:7.9px;letter-spacing:-0.05px;transform:scaleX(0.84);transform-origin:100% 50%;margin-top:-0.3px">2 934 336</div>
<div class="t" style="left:242.20px;top:451.13px;">Б</div>
<div class="t" style="right:319.00px;top:451.13px;text-align:right;font-size:7.9px;letter-spacing:-0.05px;transform:scaleX(0.84);transform-origin:100% 50%;margin-top:-0.3px">345</div>
<div class="t" style="right:625.70px;top:461.50px;text-align:right;font-size:7.9px;letter-spacing:-0.05px;transform:scaleX(0.84);transform-origin:100% 50%;margin-top:-0.3px">10</div>
<div class="t" style="left:80.80px;top:461.50px;">Сочи</div>
<div class="t" style="right:540.30px;top:461.50px;text-align:right;font-size:7.9px;letter-spacing:-0.05px;transform:scaleX(0.84);transform-origin:100% 50%;margin-top:-0.3px">7</div>
<div class="t" style="right:506.90px;top:461.50px;text-align:right;font-size:7.9px;letter-spacing:-0.05px;transform:scaleX(0.84);transform-origin:100% 50%;margin-top:-0.3px">67 723</div>
<div class="t" style="right:467.30px;top:461.50px;text-align:right;font-size:7.9px;letter-spacing:-0.05px;transform:scaleX(0.84);transform-origin:100% 50%;margin-top:-0.3px">474 061</div>
<div class="t" style="left:242.20px;top:461.50px;">В</div>
<div class="t" style="right:319.00px;top:461.50px;text-align:right;font-size:7.9px;letter-spacing:-0.05px;transform:scaleX(0.84);transform-origin:100% 50%;margin-top:-0.3px">811</div>
<div class="t" style="right:625.70px;top:471.87px;text-align:right;font-size:7.9px;letter-spacing:-0.05px;transform:scaleX(0.84);transform-origin:100% 50%;margin-top:-0.3px">7</div>
<div class="t" style="left:80.80px;top:471.87px;">Мурманск</div>
<div class="t" style="right:540.30px;top:471.87px;text-align:right;font-size:7.9px;letter-spacing:-0.05px;transform:scaleX(0.84);transform-origin:100% 50%;margin-top:-0.3px">89</div>
<div class="t" style="right:506.90px;top:471.87px;text-align:right;font-size:7.9px;letter-spacing:-0.05px;transform:scaleX(0.84);transform-origin:100% 50%;margin-top:-0.3px">76 144</div>
<div class="t" style="right:467.30px;top:471.87px;text-align:right;font-size:7.9px;letter-spacing:-0.05px;transform:scaleX(0.84);transform-origin:100% 50%;margin-top:-0.3px">6 776 816</div>
<div class="t" style="left:242.20px;top:471.87px;">А</div>
<div class="t" style="right:319.00px;top:471.87px;text-align:right;font-size:7.9px;letter-spacing:-0.05px;transform:scaleX(0.84);transform-origin:100% 50%;margin-top:-0.3px">68</div>
<div class="t" style="right:625.70px;top:482.24px;text-align:right;font-size:7.9px;letter-spacing:-0.05px;transform:scaleX(0.84);transform-origin:100% 50%;margin-top:-0.3px">4</div>
<div class="t" style="left:80.80px;top:482.24px;">Архангельск</div>
<div class="t" style="right:540.30px;top:482.24px;text-align:right;font-size:7.9px;letter-spacing:-0.05px;transform:scaleX(0.84);transform-origin:100% 50%;margin-top:-0.3px">15</div>
<div class="t" style="right:506.90px;top:482.24px;text-align:right;font-size:7.9px;letter-spacing:-0.05px;transform:scaleX(0.84);transform-origin:100% 50%;margin-top:-0.3px">51 504</div>
<div class="t" style="right:467.30px;top:482.24px;text-align:right;font-size:7.9px;letter-spacing:-0.05px;transform:scaleX(0.84);transform-origin:100% 50%;margin-top:-0.3px">772 560</div>
<div class="t" style="left:242.20px;top:482.24px;">В</div>
<div class="t" style="right:319.00px;top:482.24px;text-align:right;font-size:7.9px;letter-spacing:-0.05px;transform:scaleX(0.84);transform-origin:100% 50%;margin-top:-0.3px">726</div>
<div class="t" style="right:625.70px;top:492.61px;text-align:right;font-size:7.9px;letter-spacing:-0.05px;transform:scaleX(0.84);transform-origin:100% 50%;margin-top:-0.3px">3</div>
<div class="t" style="left:80.80px;top:492.61px;">Челябинск</div>
<div class="t" style="right:540.30px;top:492.61px;text-align:right;font-size:7.9px;letter-spacing:-0.05px;transform:scaleX(0.84);transform-origin:100% 50%;margin-top:-0.3px">63</div>
<div class="t" style="right:506.90px;top:492.61px;text-align:right;font-size:7.9px;letter-spacing:-0.05px;transform:scaleX(0.84);transform-origin:100% 50%;margin-top:-0.3px">67 867</div>
<div class="t" style="right:467.30px;top:492.61px;text-align:right;font-size:7.9px;letter-spacing:-0.05px;transform:scaleX(0.84);transform-origin:100% 50%;margin-top:-0.3px">4 275 621</div>
<div class="t" style="left:242.20px;top:492.61px;">Б</div>
<div class="t" style="right:319.00px;top:492.61px;text-align:right;font-size:7.9px;letter-spacing:-0.05px;transform:scaleX(0.84);transform-origin:100% 50%;margin-top:-0.3px">213</div>
<div class="t" style="right:625.70px;top:502.98px;text-align:right;font-size:7.9px;letter-spacing:-0.05px;transform:scaleX(0.84);transform-origin:100% 50%;margin-top:-0.3px">3</div>
<div class="t" style="left:80.80px;top:502.98px;">Челябинск</div>
<div class="t" style="right:540.30px;top:502.98px;text-align:right;font-size:7.9px;letter-spacing:-0.05px;transform:scaleX(0.84);transform-origin:100% 50%;margin-top:-0.3px">10</div>
<div class="t" style="right:506.90px;top:502.98px;text-align:right;font-size:7.9px;letter-spacing:-0.05px;transform:scaleX(0.84);transform-origin:100% 50%;margin-top:-0.3px">61 505</div>
<div class="t" style="right:467.30px;top:502.98px;text-align:right;font-size:7.9px;letter-spacing:-0.05px;transform:scaleX(0.84);transform-origin:100% 50%;margin-top:-0.3px">615 050</div>
<div class="t" style="left:242.20px;top:502.98px;">В</div>
<div class="t" style="right:319.00px;top:502.98px;text-align:right;font-size:7.9px;letter-spacing:-0.05px;transform:scaleX(0.84);transform-origin:100% 50%;margin-top:-0.3px">769</div>
<div class="t" style="right:625.70px;top:513.35px;text-align:right;font-size:7.9px;letter-spacing:-0.05px;transform:scaleX(0.84);transform-origin:100% 50%;margin-top:-0.3px">10</div>
<div class="t" style="left:80.80px;top:513.35px;">Сочи</div>
<div class="t" style="right:540.30px;top:513.35px;text-align:right;font-size:7.9px;letter-spacing:-0.05px;transform:scaleX(0.84);transform-origin:100% 50%;margin-top:-0.3px">90</div>
<div class="t" style="right:506.90px;top:513.35px;text-align:right;font-size:7.9px;letter-spacing:-0.05px;transform:scaleX(0.84);transform-origin:100% 50%;margin-top:-0.3px">45 225</div>
<div class="t" style="right:467.30px;top:513.35px;text-align:right;font-size:7.9px;letter-spacing:-0.05px;transform:scaleX(0.84);transform-origin:100% 50%;margin-top:-0.3px">4 070 250</div>
<div class="t" style="left:242.20px;top:513.35px;">Б</div>
<div class="t" style="right:319.00px;top:513.35px;text-align:right;font-size:7.9px;letter-spacing:-0.05px;transform:scaleX(0.84);transform-origin:100% 50%;margin-top:-0.3px">227</div>
<div style="position:absolute;left:240.00px;top:292.51px;width:34.70px;height:11.57px;border:1.1px solid #2c7a4e;box-sizing:border-box"></div>
<div style="position:absolute;left:273.10px;top:302.48px;width:2.00px;height:2.00px;background:#1f5e3a"></div>
<div style="position:absolute;left:0.00px;top:524.00px;width:704.00px;height:16.00px;background:#e6e6e6"></div>
<div style="position:absolute;left:0.00px;top:538.40px;width:704.00px;height:1.60px;background:#606060"></div>
<svg style="position:absolute;left:12px;top:529px" width="5" height="5" viewBox="0 0 5 5"><path d="M3.8 0.5L1 2.5L3.8 4.5Z" fill="#444"/></svg>
<svg style="position:absolute;left:27px;top:529px" width="5" height="5" viewBox="0 0 5 5"><path d="M1.2 0.5L4 2.5L1.2 4.5Z" fill="#c4c4c4"/></svg>
<div class="t" style="left:-56.00px;width:200px;top:528.00px;text-align:center;color:#444;font-size:6px">...</div>
<div style="position:absolute;left:51.40px;top:527.50px;width:0.70px;height:8.50px;background:#c0c0c0"></div>
<div class="t" style="left:59.00px;top:528.20px;color:#5a5a5a;letter-spacing:-0.18px;font-size:7px">Работа с текстом 2</div>
<div class="t" style="left:133.50px;top:528.20px;color:#5a5a5a;letter-spacing:-0.18px;font-size:7px">Работа с текстом 3</div>
<div class="t" style="left:207.70px;top:528.20px;color:#5a5a5a;letter-spacing:-0.18px;font-size:7px">Работа с таблицами-1</div>
<div style="position:absolute;left:125.50px;top:527.50px;width:0.70px;height:8.50px;background:#c0c0c0"></div>
<div style="position:absolute;left:200.00px;top:527.50px;width:0.70px;height:8.50px;background:#c0c0c0"></div>
<div style="position:absolute;left:285.00px;top:523.50px;width:84.10px;height:13.50px;background:#fff;box-shadow:0 0.5px 1px rgba(0,0,0,0.25)"></div>
<div style="position:absolute;left:285.00px;top:536.20px;width:84.10px;height:0.90px;background:#217346"></div>
<div class="t" style="left:227.10px;width:200px;top:528.20px;text-align:center;font-weight:bold;color:#217346;letter-spacing:-0.2px;font-size:7px">Работа с таблицами-2</div>
<svg style="position:absolute;left:386px;top:527px" width="9" height="9" viewBox="0 0 9 9"><circle cx="4.5" cy="4.5" r="3.7" fill="none" stroke="#777" stroke-width="0.7"/><path d="M4.5 2.6V6.4M2.6 4.5H6.4" stroke="#777" stroke-width="0.7"/></svg>
<div style="position:absolute;left:597.00px;top:527.50px;width:0.70px;height:8.50px;background:#c8c8c8"></div>
<div style="position:absolute;left:605.00px;top:529.20px;width:99.00px;height:6.40px;background:#fff;border:0.6px solid #c8c8c8;box-sizing:border-box"></div>
<div style="position:absolute;left:605.00px;top:529.20px;width:7.80px;height:6.40px;background:#fff;border:0.6px solid #c8c8c8;box-sizing:border-box"></div>
<svg style="position:absolute;left:607px;top:530.4px" width="4" height="4" viewBox="0 0 4 4"><path d="M3 0.5L1 2L3 3.5Z" fill="#444"/></svg>
<svg style="position:absolute;left:590px;top:494px" width="114" height="36" viewBox="590 494 114 36"><defs><filter id="sh" x="-20%" y="-20%" width="140%" height="140%"><feGaussianBlur in="SourceAlpha" stdDeviation="0.8"/><feOffset dx="0.3" dy="0.7"/><feComponentTransfer><feFuncA type="linear" slope="0.35"/></feComponentTransfer><feMerge><feMergeNode/><feMergeNode in="SourceGraphic"/></feMerge></filter></defs><g fill="#fff" stroke="#fff" stroke-width="0.4" filter="url(#sh)"><circle cx="605.6" cy="519.2" r="8"/><circle cx="618.8" cy="521.2" r="4.8"/><circle cx="617.7" cy="508.9" r="6"/><circle cx="607.0" cy="507.5" r="4.1"/></g></svg>
<div style="position:absolute;left:627px;top:497.8px;font-family:'Liberation Sans';font-weight:bold;font-size:29.5px;line-height:32px;letter-spacing:-1.3px;color:#fff;-webkit-text-stroke:0.9px #fff;text-shadow:0.3px 0.8px 1.3px rgba(0,0,0,0.45),0 0 1px rgba(0,0,0,0.25),0 0 4px #fff,0 0 4px #fff;white-space:nowrap">Avito</div>
</div></body></html>
